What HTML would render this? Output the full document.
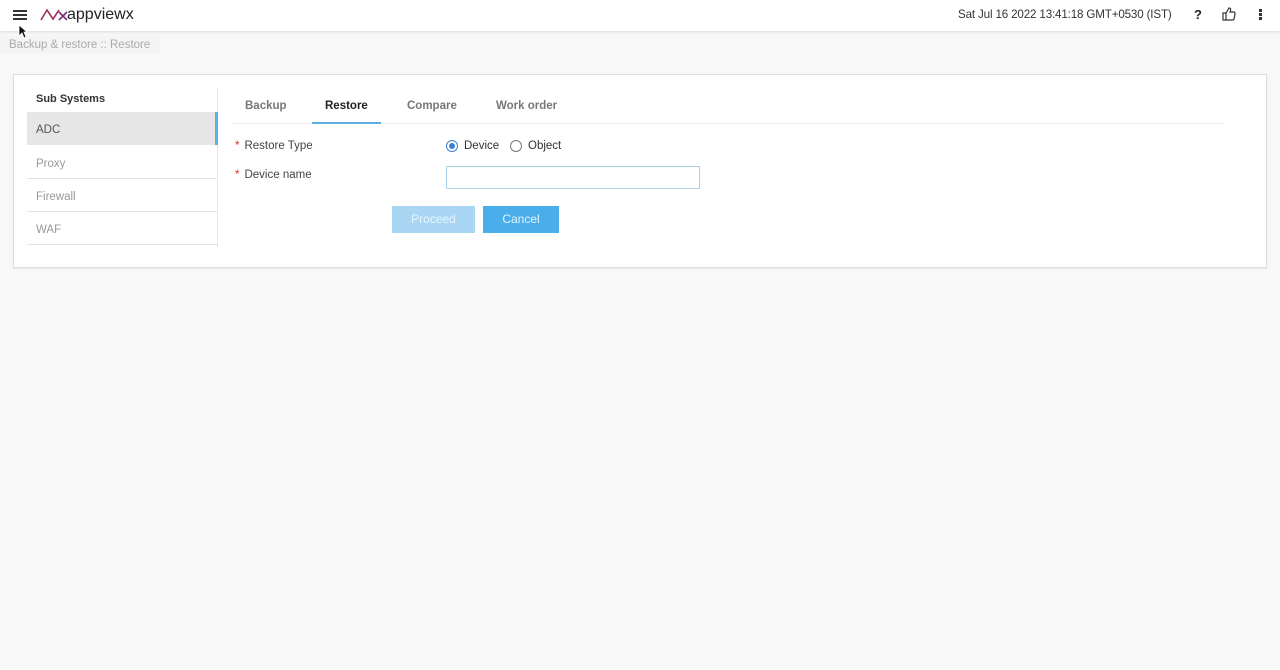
<!DOCTYPE html>
<html><head><style>
*{box-sizing:border-box;margin:0;padding:0}
body{width:1280px;height:670px;background:#f8f8f8;font-family:"Liberation Sans",sans-serif;position:relative;overflow:hidden;color:#333}
.top{position:absolute;left:0;top:0;width:1280px;height:31px;background:#fff;box-shadow:0 1px 3px rgba(0,0,0,.12)}
.ab{position:absolute;white-space:nowrap}
.crumb{position:absolute;left:0;top:36px;height:18px;width:160px;background:#f4f4f4;font-size:11.5px;color:#aaa;padding:3px 9px;white-space:nowrap}
.card{position:absolute;left:13px;top:74px;width:1254px;height:194px;background:#fff;border:1px solid #ddd;box-shadow:0 1px 2px rgba(0,0,0,.08)}
.side{position:absolute;left:27px;top:88px;width:191px;height:159px;border-right:1px solid #e6e6e6}
.item{position:absolute;left:0;width:190px;height:33px;font-size:11.5px;color:#999;padding:12px 9px 0;border-bottom:1px solid #e4e4e4}
.tab{position:absolute;top:100px;font-size:11.5px;font-weight:bold;color:#777;white-space:nowrap}
.lbl{position:absolute;font-size:11.5px;color:#444;white-space:nowrap}
.lbl b{color:#c33;font-weight:normal;margin-right:5px}
.btn{position:absolute;top:206px;height:27px;font-size:12px;color:#fff;text-align:center;line-height:27px}
</style></head><body>
<div class="top">
 <div class="ab" style="left:13px;top:10px;width:14px;height:2px;background:#333;box-shadow:0 4px 0 #333,0 8px 0 #333"></div>
 <svg class="ab" style="left:40px;top:8px" width="28" height="13" viewBox="0 0 28 13"><path d="M1 12 L7 2 L13 11 L19 2" fill="none" stroke="#a03060" stroke-width="1.6"/><path d="M19 4 L27 12 M27 4 L19 12" stroke="#7a3070" stroke-width="1.6"/></svg>
 <div class="ab" style="left:67px;top:6px;font-size:16px;color:#222">appviewx</div>
 <div class="ab" style="left:958px;top:8px;font-size:11.6px;color:#333;letter-spacing:-0.15px">Sat Jul 16 2022 13:41:18 GMT+0530 (IST)</div>
 <div class="ab" style="left:1194px;top:7px;font-size:13px;font-weight:bold;color:#222">?</div>
 <svg class="ab" style="left:1222px;top:7px" width="14" height="14" viewBox="0 0 14 14"><path d="M1 6h3v7H1z M4 6 L7 1 C9 1 9 3 8 5 H12 C13 5 13 6 13 7 L12 12 C12 13 11 13 10 13 H4" fill="none" stroke="#333" stroke-width="1.2"/></svg>
 <div class="ab" style="left:1259px;top:9px;width:3px;height:3px;background:#333;box-shadow:0 4px 0 #333,0 8px 0 #333"></div>
</div>
<div class="crumb">Backup &amp; restore :: Restore</div>
<svg class="ab" style="left:18px;top:24px" width="10" height="15" viewBox="0 0 10 15"><path d="M1 1 L1 12 L4 9 L6 14 L8 13 L6 8 L9 8 Z" fill="#111" stroke="#fff" stroke-width=".8"/></svg>
<div class="card"></div>
<div class="side">
 <div class="ab" style="left:9px;top:5px;font-size:11px;font-weight:bold;color:#333">Sub Systems</div>
 <div class="item" style="top:24px;background:#e6e6e6;color:#555;border-bottom:none;border-right:3px solid #5ab0e0;width:191px">ADC</div>
 <div class="item" style="top:58px">Proxy</div>
 <div class="item" style="top:91px">Firewall</div>
 <div class="item" style="top:124px">WAF</div>
</div>
<div class="ab" style="left:232px;top:123px;width:992px;height:1px;background:#eee"></div>
<div class="tab" style="left:245px">Backup</div>
<div class="tab" style="left:325px;color:#222">Restore</div>
<div class="ab" style="left:312px;top:122px;width:69px;height:2px;background:#5ab0e0"></div>
<div class="tab" style="left:407px">Compare</div>
<div class="tab" style="left:496px">Work order</div>
<div class="lbl" style="left:235px;top:140px"><b>*</b>Restore Type</div>
<div class="lbl" style="left:235px;top:169px"><b>*</b>Device name</div>
<div class="ab" style="left:446px;top:140px;width:12px;height:12px;border:1px solid #3a7fd0;border-radius:50%"><div style="margin:2px;width:6px;height:6px;border-radius:50%;background:#3a7fd0"></div></div>
<div class="lbl" style="left:464px;top:140px;color:#333">Device</div>
<div class="ab" style="left:510px;top:140px;width:12px;height:12px;border:1px solid #777;border-radius:50%"></div>
<div class="lbl" style="left:528px;top:140px;color:#333">Object</div>
<div class="ab" style="left:446px;top:166px;width:254px;height:23px;border:1px solid #a8d4ec"></div>
<div class="btn" style="left:392px;width:83px;background:#a9d6f2;color:#e8f4fb">Proceed</div>
<div class="btn" style="left:483px;width:76px;background:#4aaeea;color:#e6f4fc">Cancel</div>
</body></html>
